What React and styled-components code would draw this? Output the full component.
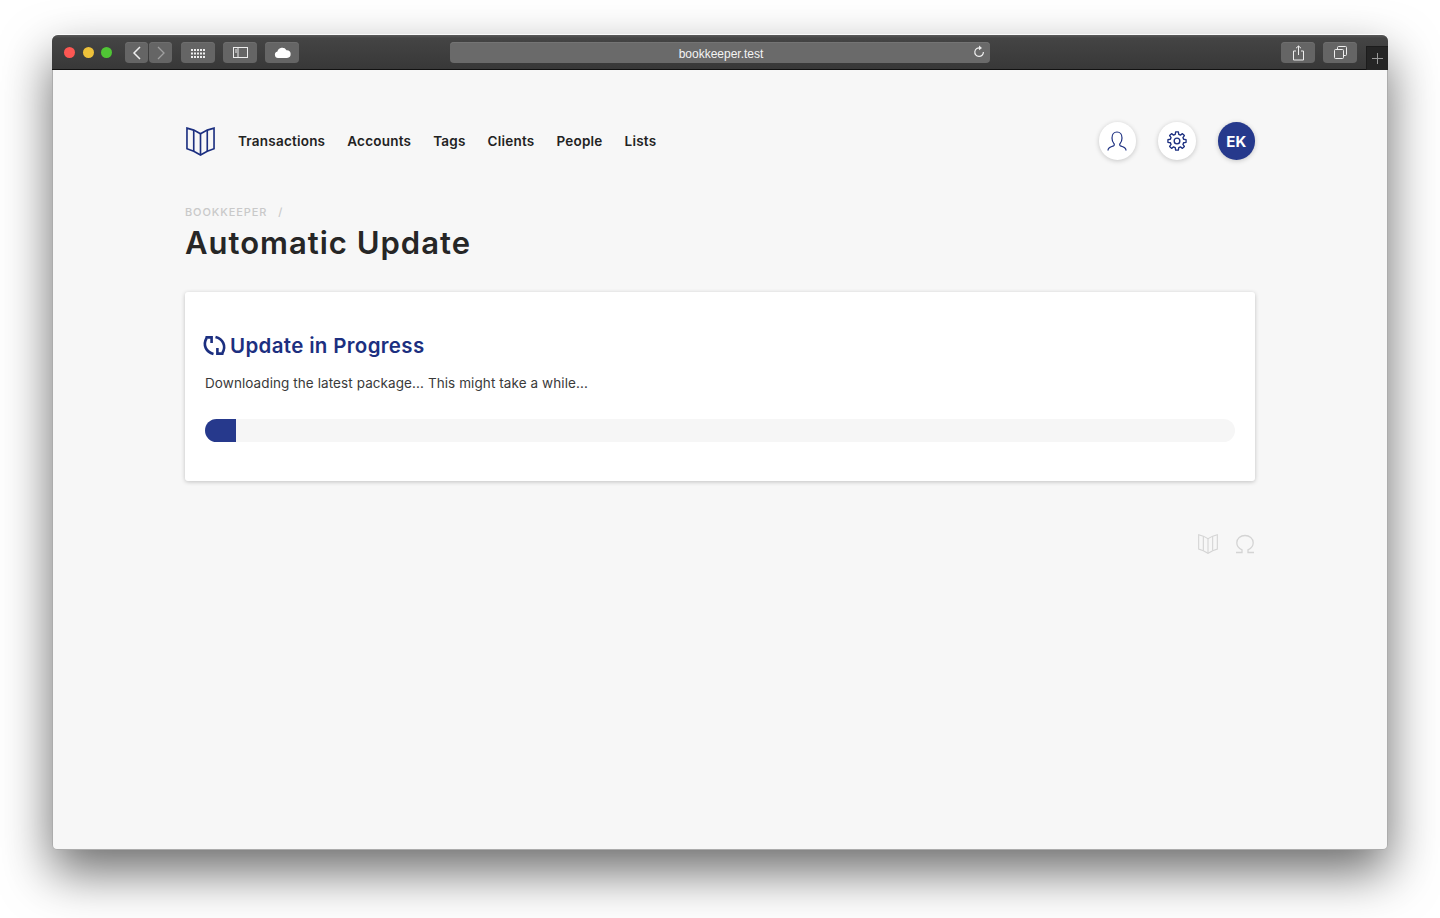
import React from 'react';
import styled, { createGlobalStyle } from 'styled-components';

const GlobalStyle = createGlobalStyle`
  html, body {
    margin: 0;
    padding: 0;
    background: #fff;
  }
  body {
    font-family: Inter, 'Open Sans', sans-serif;
  }
`;

const Page = styled.div`
  width: 1440px;
  height: 918px;
  box-sizing: border-box;
  padding: 35px 52px 68px;
  overflow: hidden;
`;

const Window = styled.div`
  height: 815px;
  display: flex;
  flex-direction: column;
  border-radius: 6px 6px 5px 5px;
  background: #f7f7f7;
  box-shadow: inset 0 0 0 1px rgba(0, 0, 0, 0.3), 0 -1px 0 rgba(255, 255, 255, 0.8), 0 22px 50px rgba(0, 0, 0, 0.58);
  overflow: hidden;
`;

const TitleBar = styled.div`
  height: 35px;
  flex: none;
  box-sizing: border-box;
  display: flex;
  align-items: center;
  padding: 1px 0 0 12px;
  background: linear-gradient(#5a5a5a 0, #444 3px, #383838 100%);
  border-bottom: 1px solid #111;
`;

const Light = styled.span`
  width: 11px;
  height: 11px;
  border-radius: 50%;
  margin-right: 7.5px;
  background: ${(p) => p.$color};
`;

const ToolButton = styled.div`
  width: ${(p) => p.$width || 34}px;
  height: 21px;
  margin-left: ${(p) => p.$gap ?? 8}px;
  flex: none;
  display: flex;
  align-items: center;
  justify-content: center;
  border-radius: 4px;
  background: #656565;
  box-shadow: inset 0 1px 0 #6e6e6e;
  color: ${(p) => p.$dim ? '#a0a0a0' : '#eee'};
`;

const Address = styled.div`
  position: relative;
  width: 540px;
  height: 21px;
  box-sizing: border-box;
  padding: 2px 0 0 2px;
  margin-left: 151px;
  flex: none;
  display: flex;
  align-items: center;
  justify-content: center;
  border-radius: 4px;
  background: #6a6a6a;
  box-shadow: inset 0 1px 0 #747474;
  color: #f4f4f4;
  font-family: 'Liberation Sans', sans-serif;
  font-size: 12px;
`;

const Reload = styled.span`
  position: absolute;
  right: 4px;
  top: 3px;
  display: flex;
  color: #eee;
`;

const Spacer = styled.div`
  flex: 1;
`;

const NewTab = styled.div`
  width: 22px;
  height: 24px;
  margin: 0 0 -1px 9px;
  align-self: flex-end;
  display: flex;
  align-items: center;
  justify-content: center;
  background: #252525;
  border-left: 1px solid #1c1c1c;
  border-top: 1px solid #1c1c1c;
  box-sizing: border-box;
  color: #999;
`;

const Content = styled.main`
  width: 1070px;
  margin: 0 auto;
`;

const Header = styled.header`
  display: flex;
  align-items: center;
  height: 38px;
  margin-top: 52px;
`;

const Logo = styled.span`
  display: flex;
  width: 29px;
  margin: 0 23px 0 1px;
  color: #1c2f80;
`;

const Nav = styled.nav`
  display: flex;
  gap: 22px;
  flex: 1;
`;

const NavLink = styled.a`
  font-size: 13.5px;
  font-weight: 600;
  color: #222;
  letter-spacing: 0.22px;
  margin-top: -1px;
`;

const Actions = styled.div`
  display: flex;
  gap: 22px;
`;

const Circle = styled.div`
  width: 37.5px;
  height: 37.5px;
  border-radius: 50%;
  display: flex;
  align-items: center;
  justify-content: center;
  background: ${(p) => p.$filled ? '#26398c' : '#fff'};
  color: ${(p) => p.$filled ? '#fff' : '#1c2f80'};
  box-shadow: 0 1px 5px rgba(0, 0, 0, 0.2);
  font-size: 15px;
  font-weight: 700;
`;

const Crumbs = styled.div`
  margin-top: 45px;
  display: flex;
  gap: 11px;
  height: 14px;
  line-height: 14px;
  font-size: 11px;
  font-weight: 500;
  letter-spacing: 0.9px;
  color: #c9c9c9;
`;

const Title = styled.h1`
  margin: 6px 0 0;
  font-size: 31px;
  line-height: 36px;
  font-weight: 600;
  letter-spacing: 1px;
  color: #262626;
`;

const Card = styled.section`
  height: 189px;
  margin-top: 31px;
  box-sizing: border-box;
  padding: 39px 20px 0;
  background: #fff;
  border-radius: 3px;
  box-shadow: 0 1px 4px rgba(0, 0, 0, 0.22);
`;

const CardTitle = styled.h2`
  display: flex;
  align-items: center;
  gap: 5px;
  margin: 0 0 0 -1px;
  height: 28px;
  font-size: 20.5px;
  font-weight: 600;
  letter-spacing: 0.34px;
  color: #1c2f80;
`;

const CardText = styled.p`
  margin: 14px 0 0;
  font-size: 13.5px;
  line-height: 20px;
  letter-spacing: 0.085px;
  color: #3a3a3a;
`;

const Track = styled.div`
  height: 23px;
  margin-top: 26px;
  border-radius: 12px;
  background: #f6f6f6;
  overflow: hidden;
`;

const Fill = styled.div`
  height: 100%;
  background: #26398c;
`;

const Footer = styled.footer`
  display: flex;
  justify-content: flex-end;
  align-items: center;
  gap: 17px;
  height: 24px;
  margin-top: 51px;
  color: #d4d4d4;
`;

const BookIcon = ({ size, width = 1.4 }) => (
  <svg width={size} height={size} viewBox="0 0 30 30" fill="none" stroke="currentColor" strokeWidth={width}>
    <path d="M1 1.200 8 3.200 15 7 22 3.200 29 1.200V22.500L22 25 15 29 8 25 1 22.500Z" />
    <path d="M8 3.200V25M15 7V29M22 3.200V25" />
  </svg>
);

// eight rounded teeth around the centre
const gearPath = () => {
  const pts = [];
  for (let i = 0; i < 8; i++) {
    const a = (i * Math.PI) / 4 - Math.PI / 2;
    [[-0.26, 8.2], [-0.15, 11], [0.15, 11], [0.26, 8.2]].forEach(([d, r]) => {
      pts.push(`${(12 + r * Math.cos(a + d)).toFixed(2)} ${(12 + r * Math.sin(a + d)).toFixed(2)}`);
    });
  }
  return `M${pts.join('L')}Z`;
};

const App = () => {
  const links = ['Transactions', 'Accounts', 'Tags', 'Clients', 'People', 'Lists'];
  const progress = 3;

  return (
    <>
      <GlobalStyle />
      <Page>
        <Window>
          <TitleBar>
            <Light $color="#fc5753" />
            <Light $color="#edc13a" />
            <Light $color="#50c535" style={{ marginRight: 0 }} />
            <ToolButton $width={23} $gap={13}>
              <svg width="10" height="14" viewBox="0 0 10 14" fill="none" stroke="currentColor" strokeWidth="1.5"><path d="M8 1 2 7l6 6" /></svg>
            </ToolButton>
            <ToolButton $width={23} $gap={1} $dim>
              <svg width="10" height="14" viewBox="0 0 10 14" fill="none" stroke="currentColor" strokeWidth="1.3"><path d="m2 1 6 6-6 6" /></svg>
            </ToolButton>
            <ToolButton $width={34} $gap={9}>
              <svg width="14" height="10" viewBox="0 0 14 10" fill="currentColor">
                {[0, 1, 2].map((r) => [0, 1, 2, 3, 4].map((c) => (
                  <rect key={`${r}${c}`} x={c * 3} y={r * 3.5 + 1} width="2" height="2" />
                )))}
              </svg>
            </ToolButton>
            <ToolButton $width={34} $gap={8}>
              <svg width="15" height="11" viewBox="0 0 15 11" fill="none" stroke="currentColor"><rect x="0.5" y="0.5" width="14" height="10" /><path d="M5 .5v10" /><path d="M2 3h2M2 5h2" /></svg>
            </ToolButton>
            <ToolButton $width={34} $gap={8}>
              <svg width="17" height="11" viewBox="0 0 17 11" fill="#fff"><path d="M4 11a3.300 3.300 0 0 1-.6-6.500A5 5 0 0 1 12.500 3.200 3.900 3.900 0 0 1 13 11Z" /></svg>
            </ToolButton>
            <Address>
              bookkeeper.test
              <Reload>
                <svg width="14" height="14" viewBox="0 0 14 14" fill="none" stroke="currentColor" strokeWidth="1.2">
                  <path d="M8.200 3A4.300 4.300 0 1 0 11.400 7" />
                  <path d="M7 .6 10 3 7 5.200Z" fill="currentColor" stroke="none" />
                </svg>
              </Reload>
            </Address>
            <Spacer />
            <ToolButton $width={34}>
              <svg width="13" height="16" viewBox="0 0 13 16" fill="none" stroke="currentColor"><path d="M4 6H1.500v9h10V6H9" /><path d="M6.500 10V1M4 3.200 6.500 1 9 3.200" /></svg>
            </ToolButton>
            <ToolButton $width={34} $gap={8}>
              <svg width="13" height="13" viewBox="0 0 13 13" fill="none" stroke="currentColor"><rect x="0.5" y="3.500" width="9" height="9" rx="1" /><path d="M3.500 3.500v-2a1 1 0 0 1 1-1h7a1 1 0 0 1 1 1v7a1 1 0 0 1-1 1h-2" /></svg>
            </ToolButton>
            <NewTab>
              <svg width="11" height="11" viewBox="0 0 11 11" stroke="currentColor"><path d="M5.500 0v11M0 5.500h11" /></svg>
            </NewTab>
          </TitleBar>
          <Content>
            <Header>
              <Logo><BookIcon size={29} width={1.7} /></Logo>
              <Nav>
                {links.map((link) => <NavLink key={link}>{link}</NavLink>)}
              </Nav>
              <Actions>
                <Circle>
                  <svg width="22" height="22" viewBox="0 0 22 22" fill="none" stroke="currentColor" strokeWidth="1.2">
                    <path d="M2 20.500c0-3.500 3-3.500 5.500-4.600 1-.5 1-1.800.3-2.600C6.500 12 6 10 6 8c0-3.500 2-6 5-6s5 2.500 5 6c0 2-.5 4-1.800 5.300-.7.8-.7 2.100.3 2.600 2.500 1.100 5.500 1.100 5.500 4.600" />
                  </svg>
                </Circle>
                <Circle>
                  <svg width="20" height="20" viewBox="0 0 24 24" fill="none" stroke="currentColor" strokeWidth="1.6" strokeLinejoin="round">
                    <circle cx="12" cy="12" r="3.400" />
                    <path d={gearPath()} />
                  </svg>
                </Circle>
                <Circle $filled>EK</Circle>
              </Actions>
            </Header>
            <Crumbs><span>BOOKKEEPER</span><span>/</span></Crumbs>
            <Title>Automatic Update</Title>
            <Card>
              <CardTitle>
                <svg width="21" height="21" viewBox="0 0 21 21" fill="none" stroke="currentColor" strokeWidth="2.6" overflow="visible">
                  <path d="M2.600 3C-1.500 10 2 17 9.500 19" />
                  <path d="M1.500 2.400H7.600V8" />
                  <path d="M18.400 18C22.500 11 19 4 11.500 2" />
                  <path d="M19.500 18.600H13.400V13" />
                </svg>
                Update in Progress
              </CardTitle>
              <CardText>Downloading the latest package... This might take a while...</CardText>
              <Track>
                <Fill style={{ width: `${progress}%` }} />
              </Track>
            </Card>
            <Footer>
              <BookIcon size={20} width={1.6} />
              <svg width="20" height="20" viewBox="0 0 20 20" fill="none" stroke="currentColor" strokeWidth="1.3">
                <path d="M1 18.500h6v-2.700C4 14.500 1.800 12 1.800 8.800 1.800 4.500 5.500 1.500 10 1.500s8.200 3 8.200 7.300c0 3.200-2.200 5.700-5.200 7v2.700h6" />
              </svg>
            </Footer>
          </Content>
        </Window>
      </Page>
    </>
  );
};

export default App;
